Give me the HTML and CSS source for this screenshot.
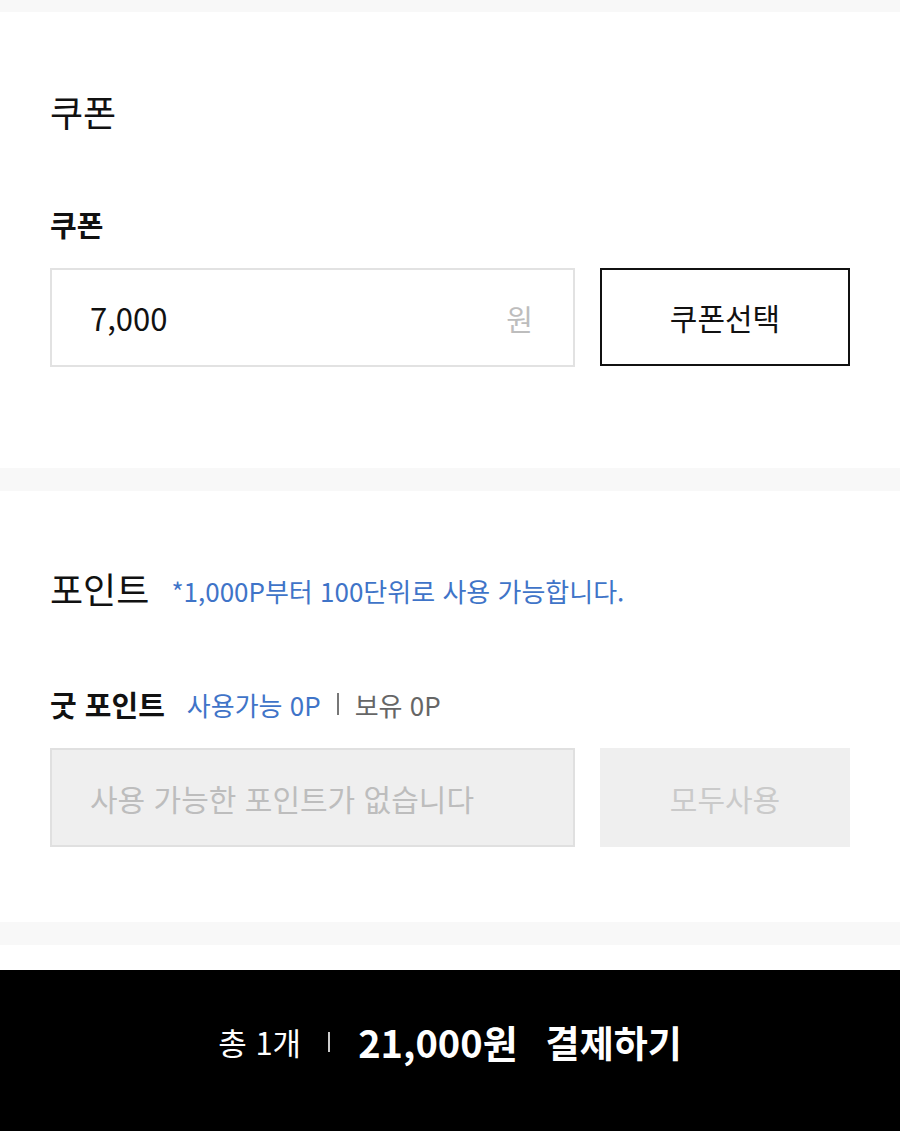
FILE: index.html
```html
<!DOCTYPE html>
<html lang="ko">
<head>
<meta charset="utf-8">
<link rel="stylesheet" href="styles.css">
</head>
<body>
<div class="band band-top"></div>
<section class="section coupon">
  <h2 class="heading">쿠폰</h2>
  <div class="label">쿠폰</div>
  <div class="row">
    <div class="field">
      <span class="value">7,000</span>
      <span class="unit">원</span>
    </div>
    <button class="btn btn-outline">쿠폰선택</button>
  </div>
</section>
<div class="band"></div>
<section class="section point">
  <div class="heading-row">
    <h2 class="heading">포인트</h2>
    <span class="note">*1,000P부터 100단위로 사용 가능합니다.</span>
  </div>
  <div class="label-row">
    <span class="label">굿 포인트</span>
    <span class="avail">사용가능 0P</span>
    <span class="sep"></span>
    <span class="own">보유 0P</span>
  </div>
  <div class="row">
    <div class="field field-disabled">
      <span class="placeholder">사용 가능한 포인트가 없습니다</span>
    </div>
    <button class="btn btn-disabled">모두사용</button>
  </div>
</section>
<div class="band"></div>
<div class="spacer"></div>
<footer class="paybar">
  <span class="count">총 1개</span>
  <span class="pipe"></span>
  <span class="total">21,000원</span>
  <span class="pay">결제하기</span>
</footer>
</body>
</html>
```
FILE: styles.css
```css
* { box-sizing: border-box; }
html, body { margin: 0; padding: 0; }
body {
  background: #fff;
  font-family: "Noto Sans CJK KR", "Noto Sans", sans-serif;
  color: #111;
  width: 900px;
  overflow: hidden;
}
.band { height: 23px; background: #f8f8f8; }
.band-top { height: 12px; }
.section { background: #fff; padding: 0 50px; }
.coupon { padding-top: 74px; padding-bottom: 101px; }
.point { padding-top: 72px; padding-bottom: 75px; }
.heading {
  margin: 0;
  font-size: 36px;
  font-weight: 400;
  line-height: 51px;
  color: #111;
}
.coupon .label { margin-top: 67px; }
.label {
  font-size: 29px;
  font-weight: 700;
  line-height: 40px;
  color: #111;
}
.row {
  display: flex;
  gap: 25px;
  margin-top: 24px;
}
.field {
  width: 525px;
  height: 99px;
  border: 2px solid #e2e2e2;
  display: flex;
  align-items: center;
  justify-content: space-between;
  padding: 0 40px 0 38px;
}
.value { font-size: 31px; color: #111; }
.unit { font-size: 29px; color: #bdbdbd; }
.btn {
  width: 250px;
  height: 99px;
  font-family: inherit;
  font-size: 30px;
  padding: 0;
  background: #fff;
}
.btn-outline { border: 2px solid #111; color: #111; height: 98px; }
.heading-row {
  display: flex;
  align-items: center;
  gap: 22px;
}
.note { font-size: 26px; color: #3f74c8; margin-top: 4px; }
.label-row {
  display: flex;
  align-items: center;
  margin-top: 70px;
  height: 40px;
}
.avail { font-size: 26px; color: #3f74c8; margin-left: 22px; }
.sep {
  width: 2px;
  height: 22px;
  background: #777;
  margin: 0 16px 0 16px;
}
.own { font-size: 26px; color: #666; }
.field-disabled { background: #efefef; border-color: #e0e0e0; }
.placeholder { font-size: 30px; color: #bdbdbd; }
.btn-disabled { background: #efefef; border: none; color: #cacaca; }
.spacer { height: 25px; background: #fff; }
.paybar {
  background: #000;
  color: #fff;
  height: 161px;
  display: flex;
  align-items: center;
  justify-content: center;
  padding-bottom: 18px;
}
.count { font-size: 31px; }
.pipe {
  width: 2px;
  height: 20px;
  background: #ccc;
  margin: 0 28px 0 27px;
}
.total { font-size: 38px; font-weight: 700; }
.pay { font-size: 37px; font-weight: 700; margin-left: 28px; }
```
